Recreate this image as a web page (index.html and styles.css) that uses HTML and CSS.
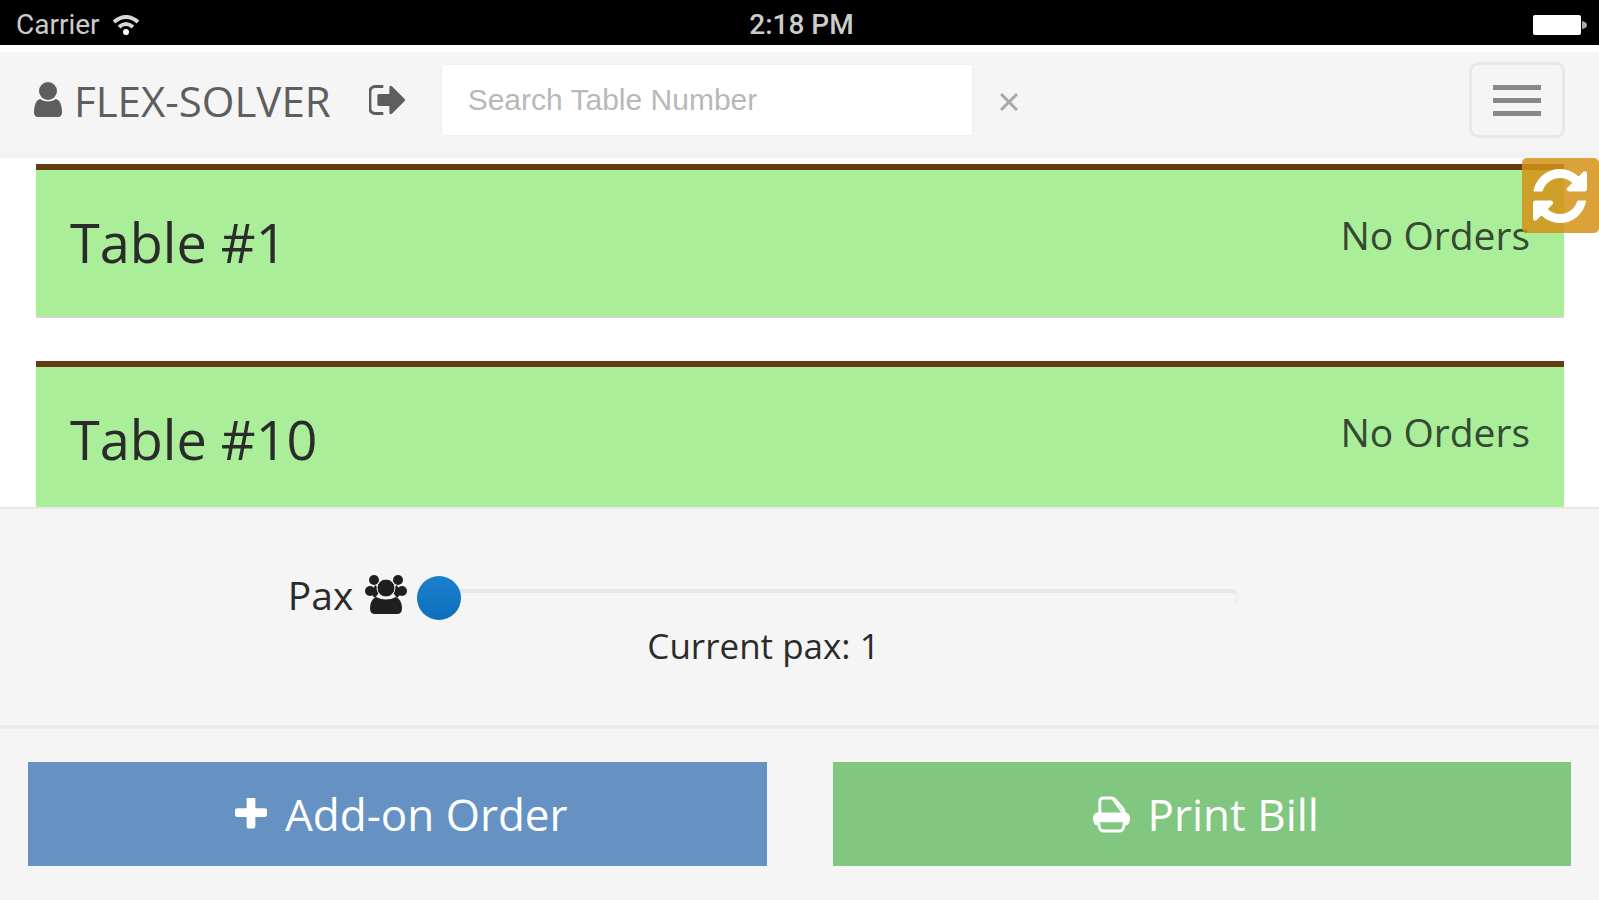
FILE: index.html
```html
<!DOCTYPE html>
<html lang="en">
<head>
    <meta charset="UTF-8">
    <meta name="viewport" content="width=device-width, initial-scale=1.0">
    <title>Tables</title>
    <link rel="stylesheet" href="styles.css">
</head>
<body>
    <div class="status-bar">
        <div class="carrier">
            <span>Carrier</span>
            <svg class="wifi" viewBox="0 0 28 20" fill="none" stroke="#d8d8d8" stroke-width="4">
                <path d="M2 7Q14-3 26 7"/>
                <path d="M7 12Q14 6 21 12"/>
                <circle cx="14" cy="17" r="3" fill="#fff" stroke="none"/>
            </svg>
        </div>
        <span class="clock">2:18 PM</span>
        <div class="battery-wrap">
            <svg class="battery" viewBox="0 0 54 22" fill="#fff">
                <rect x="0" y="1" width="48" height="20" rx="2"/>
                <path d="M49 7q5 1 5 4t-5 4z" fill="#aaa"/>
            </svg>
        </div>
    </div>

    <header class="navbar">
        <a class="user" href="#">
            <svg class="user-icon" viewBox="0 0 28 36" fill="currentColor">
                <circle cx="14" cy="9" r="9"/>
                <path d="M6 17q8 5 16 0q6 2 6 13q0 5-4 5H4q-4 0-4-5q0-11 6-13z"/>
            </svg>
            <span>FLEX-SOLVER</span>
        </a>
        <button class="icon-btn logout" type="button" aria-label="Log out">
            <svg viewBox="96 256 1568 1280" fill="currentColor">
                <path d="M704 1440q0 4 1 20t.5 26.500-3 23.500-10 19.500-20.500 6.500h-320q-119 0-203.500-84.500t-84.500-203.500v-704q0-119 84.500-203.500t203.500-84.500h320q13 0 22.500 9.500t9.500 22.500q0 4 1 20t.5 26.500-3 23.500-10 19.500-20.500 6.500h-320q-66 0-113 47t-47 113v704q0 66 47 113t113 47h312l11.500 1 11.500 3 8 5.500 7 9 2 13.500zm928-544q0 26-19 45l-544 544q-19 19-45 19t-45-19-19-45v-288h-448q-26 0-45-19t-19-45v-384q0-26 19-45t45-19h448v-288q0-26 19-45t45-19 45 19l544 544q19 19 19 45z"/>
            </svg>
        </button>
        <input class="search" type="text" placeholder="Search Table Number" aria-label="Search Table Number">
        <button class="icon-btn clear" type="button" aria-label="Clear search">
            <svg viewBox="0 0 18 18" fill="none" stroke="currentColor" stroke-width="3">
                <path d="M1 1l16 16M17 1L1 17"/>
            </svg>
        </button>
        <button class="menu-toggle" type="button" aria-label="Toggle menu">
            <span class="bar"></span>
            <span class="bar"></span>
            <span class="bar"></span>
        </button>
    </header>

    <main class="tables">
        <button class="refresh" type="button" aria-label="Refresh">
            <svg viewBox="128 128 1536 1536" fill="currentColor">
                <path d="M1639 1056q0 5-1 7-64 268-268 434.500t-478 166.500q-146 0-282.500-55t-243.500-157l-129 129q-19 19-45 19t-45-19-19-45v-448q0-26 19-45t45-19h448q26 0 45 19t19 45-19 45l-137 137q71 66 161 102t187 36q134 0 250-65t186-179q11-17 53-117 8-23 30-23h192q13 0 22.500 9.500t9.500 22.500zm25-800v448q0 26-19 45t-45 19h-448q-26 0-45-19t-19-45 19-45l138-138q-148-137-349-137-134 0-250 65t-186 179q-11 17-53 117-8 23-30 23h-199q-13 0-22.500-9.500t-9.500-22.500v-7q65-268 270-434.500t480-166.500q146 0 284 55.500t245 156.500l130-129q19-19 45-19t45 19 19 45z"/>
            </svg>
        </button>
        <section class="table-card">
            <h2>Table #1</h2>
            <span class="orders">No Orders</span>
        </section>
        <section class="table-card">
            <h2>Table #10</h2>
            <span class="orders">No Orders</span>
        </section>
    </main>

    <section class="pax-panel">
        <div class="pax">
            <div class="pax-row">
                <label for="pax">Pax</label>
                <svg class="users-icon" viewBox="0 0 42 40" fill="currentColor">
                    <circle cx="9" cy="6" r="5"/>
                    <circle cx="33" cy="6" r="5"/>
                    <circle cx="5" cy="17" r="5"/>
                    <circle cx="37" cy="17" r="5"/>
                    <path d="M10 11l6 5-6 8-4-4zM32 11l-6 5 6 8 4-4z"/>
                    <circle cx="21" cy="14" r="9" stroke="#f5f5f5" stroke-width="1"/>
                    <path d="M11 23q10 5 20 0q6 3 6 11q0 6-5 6H10q-5 0-5-6q0-8 6-11z"/>
                </svg>
                <input id="pax" type="range" min="1" max="20" value="1">
            </div>
            <p class="current">Current pax: <span id="pax-value">1</span></p>
        </div>
    </section>

    <footer class="actions">
        <button class="btn btn-add" type="button">
            <svg class="plus-icon" viewBox="192 192 1408 1408" fill="currentColor">
                <path d="M1600 736v192q0 40-28 68t-68 28h-416v416q0 40-28 68t-68 28h-192q-40 0-68-28t-28-68v-416h-416q-40 0-68-28t-28-68v-192q0-40 28-68t68-28h416v-416q0-40 28-68t68-28h192q40 0 68 28t28 68v416h416q40 0 68 28t28 68z"/>
            </svg>
            <span>Add-on Order</span>
        </button>
        <button class="btn btn-print" type="button">
            <svg class="print-icon" viewBox="0 0 38 38" fill="none" stroke="currentColor">
                <path d="M7 20V6q0-4 4-4h8q2 0 4 2l7 8q2 2 2 5v3" stroke-width="3"/>
                <path d="M20 3l10 14" stroke-width="2"/>
                <path d="M6 17h26q6 0 6 6q0 7-5 7h-2v-3H7v3H5q-5 0-5-7q0-6 6-6z" fill="currentColor" stroke="none"/>
                <path d="M6 28q0 8 5 8h16q5 0 5-8" stroke-width="3"/>
            </svg>
            <span>Print Bill</span>
        </button>
    </footer>

    <script>
        const pax = document.getElementById('pax');
        const paxValue = document.getElementById('pax-value');

        pax.addEventListener('input', () => {
            paxValue.textContent = pax.value;
        });
    </script>
</body>
</html>
```
FILE: styles.css
```css
* {
    box-sizing: border-box;
}
body {
    margin: 0;
    height: 100vh;
    display: flex;
    flex-direction: column;
    font-family: "Open Sans", sans-serif;
    font-size: 39px;
    color: #2b2b2b;
    background: #fff;
}
button {
    font-family: inherit;
    cursor: pointer;
}
svg {
    display: block;
    flex: none;
}

/* status bar */
.status-bar {
    display: grid;
    grid-template-columns: 1fr auto 1fr;
    align-items: center;
    height: 45px;
    padding: 4px 12px 0 16px;
    background: #000;
    color: #ccc;
    font-family: Roboto, sans-serif;
    font-size: 28px;
}
.carrier {
    display: flex;
    align-items: center;
    gap: 12px;
}
.wifi {
    width: 28px;
    height: 20px;
}
.clock {
    font-weight: 500;
}
.battery-wrap {
    display: flex;
    justify-content: flex-end;
}
.battery {
    width: 54px;
    height: 22px;
}

/* navbar */
.navbar {
    display: flex;
    align-items: center;
    margin-top: 7px;
    height: 106px;
    padding: 0 34px 4px;
    background: #f5f5f5;
    border-bottom: 6px solid #f2f2f2;
    color: #5e5e5e;
}
.user {
    display: flex;
    align-items: center;
    gap: 12px;
    color: inherit;
    font-size: 42px;
    text-decoration: none;
}
.user-icon {
    width: 28px;
    height: 36px;
}
.icon-btn {
    padding: 0;
    border: 0;
    background: none;
    color: inherit;
}
.logout {
    margin-left: 38px;
}
.logout svg {
    width: 37px;
    height: 30px;
}
.search {
    width: 530px;
    min-width: 0;
    height: 70px;
    margin-left: 36px;
    padding: 0 26px;
    border: 0;
    border-radius: 3px;
    background: #fff;
    box-shadow: 0 0 3px #e8e8e8;
    font-family: "Liberation Sans", sans-serif;
    font-size: 30px;
    color: #555;
}
.search::placeholder {
    color: #b8b8b8;
}
.clear {
    margin-left: 28px;
    padding-top: 4px;
    color: #a8a8a8;
}
.clear svg {
    width: 18px;
    height: 18px;
}
.menu-toggle {
    display: flex;
    flex-direction: column;
    align-items: center;
    justify-content: center;
    gap: 8px;
    width: 96px;
    height: 76px;
    margin-left: auto;
    border: 3px solid #e8e8e8;
    border-radius: 9px;
    background: transparent;
}
.bar {
    width: 48px;
    height: 5px;
    background: #888;
}

/* table list */
.tables {
    position: relative;
    flex: 1;
    min-height: 0;
    overflow: hidden;
    padding: 6px 35px 0 36px;
}
.table-card {
    display: flex;
    justify-content: space-between;
    align-items: flex-start;
    height: 154px;
    margin-bottom: 43px;
    padding: 38px 34px 0;
    background: #abee9a;
    border-top: 6px solid #643c14;
    border-bottom: 2px solid #d3d6cd;
}
.table-card h2 {
    margin: 0;
    font-size: 54px;
    font-weight: 400;
    line-height: 68px;
}
.orders {
    line-height: 54px;
    color: #344a32;
}
.refresh {
    position: absolute;
    top: 0;
    right: 0;
    width: 77px;
    height: 75px;
    padding: 0 0 0 11px;
    border: 0;
    border-radius: 5px;
    background: rgba(212, 146, 22, .85);
    color: #fff;
}
.refresh svg {
    width: 54px;
    height: 54px;
}

/* pax */
.pax-panel {
    height: 222px;
    padding-top: 58px;
    background: #f5f5f5;
    border-top: 2px solid #e8e8e8;
    border-bottom: 4px solid #ebebeb;
}
.pax {
    width: 59.500%;
    margin-left: 18%;
}
.pax-row {
    display: flex;
    align-items: center;
    height: 54px;
}
.users-icon {
    width: 42px;
    height: 40px;
    margin: 0 10px 0 12px;
    color: #1f1f1f;
}
.pax input {
    -webkit-appearance: none;
    appearance: none;
    flex: 1;
    min-width: 0;
    height: 44px;
    margin: 8px 0 0;
    background: none;
}
.pax input::-webkit-slider-runnable-track {
    height: 18px;
    border-top: 4px solid #e7e7e7;
    border-right: 4px solid #f0f0f0;
    border-radius: 8px;
}
.pax input::-webkit-slider-thumb {
    -webkit-appearance: none;
    appearance: none;
    width: 44px;
    height: 44px;
    margin-top: -17px;
    border-radius: 50%;
    background: linear-gradient(#1a80cf, #0e6fba);
}
.current {
    margin: 0;
    text-align: center;
    font-size: 35px;
    line-height: 50px;
}

/* bottom buttons */
.actions {
    display: grid;
    grid-template-columns: 1fr 1fr;
    gap: 66px;
    padding: 33px 28px 34px;
    background: #f5f5f5;
}
.btn {
    display: flex;
    align-items: center;
    justify-content: center;
    gap: 18px;
    height: 104px;
    padding: 0 0 0 8px;
    border: 0;
    font-size: 44px;
    color: #fff;
}
.btn-add {
    background: #6592c3;
}
.btn-print {
    background: #82c77f;
}
.plus-icon {
    width: 32px;
    height: 32px;
}
.print-icon {
    width: 37px;
    height: 37px;
}
```
